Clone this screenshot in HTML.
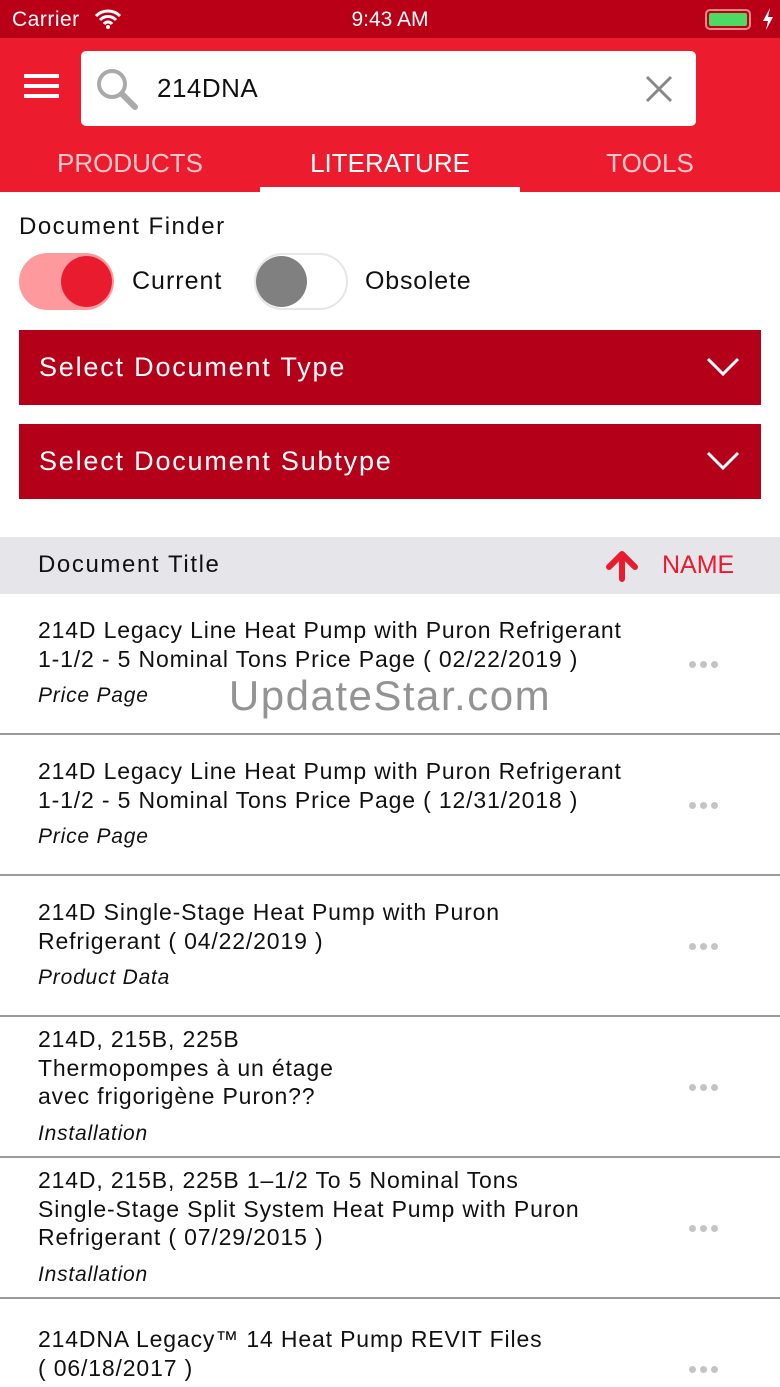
<!DOCTYPE html>
<html><head><meta charset="utf-8"><style>
*{margin:0;padding:0;box-sizing:border-box}
html{height:1387px;overflow:hidden}
body{width:780px;height:1387px;overflow:hidden;background:#fff;font-family:"Liberation Sans",sans-serif;position:relative;color:#111;white-space:nowrap}
.abs{position:absolute}
.status{top:0;left:0;width:780px;height:38px;background:#b90017;color:#fff;font-size:21px}
.hdr{top:38px;left:0;width:780px;height:154px;background:#ec1c2e}
.search{left:81px;top:51px;width:615px;height:75px;background:#fff;border-radius:5px}
.tab{top:148px;font-size:26px;color:#ffc9cd;width:260px;text-align:center}
.dd{left:19px;width:742px;height:75px;background:#b5001a;color:#fff;font-size:27px;padding-left:20px;line-height:75px;letter-spacing:1.8px}
.row{left:0;width:780px;height:141px;border-bottom:2px solid #9a9a9a;display:flex;flex-direction:column;justify-content:center;padding-left:38px;font-size:23px;line-height:28.5px;letter-spacing:0.85px}
.row i{display:block;margin-top:9px;font-size:21px;letter-spacing:0.8px}
.dots{position:absolute;right:62px;top:50%;margin-top:-3px;display:flex;gap:4px}
.dots span{width:7px;height:7px;border-radius:50%;background:#c4c4c4}
</style></head><body>
<div class="abs status">
<div class="abs" style="left:12px;top:8px;letter-spacing:0.5px">Carrier</div>
<svg class="abs" style="left:94px;top:8px" width="28" height="22" viewBox="0 0 28 22"><path d="M2 8a17 17 0 0 1 24 0M6 12a11 11 0 0 1 16 0M10 16a5 5 0 0 1 8 0" stroke="#fff" stroke-width="3" fill="none"/><circle cx="14" cy="19" r="2" fill="#fff"/></svg>
<div class="abs" style="left:0;width:780px;text-align:center;top:8px">9:43 AM</div>
<div class="abs" style="left:705px;top:9px;width:46px;height:21px;border:2px solid #e88;border-radius:5px;padding:2px"><div style="width:100%;height:100%;background:#4cd964;border-radius:2px"></div></div>
<svg class="abs" style="left:762px;top:8px" width="12" height="22" viewBox="0 0 12 22"><path d="M8 0L1 13h5l-2 9 7-13H6z" fill="#fff"/></svg>
</div>
<div class="abs hdr"></div>
<div class="abs" style="left:24px;top:74px;width:35px"><div style="height:4px;background:#fff;margin-bottom:6px"></div><div style="height:4px;background:#fff;margin-bottom:6px"></div><div style="height:4px;background:#fff"></div></div>
<div class="abs search">
<svg class="abs" style="left:12px;top:14px" width="50" height="50" viewBox="0 0 50 50"><circle cx="19" cy="19" r="13" stroke="#aaa" stroke-width="4" fill="none"/><path d="M29 29l13 13" stroke="#aaa" stroke-width="6" stroke-linecap="round"/></svg>
<div class="abs" style="left:76px;top:22px;font-size:26px;color:#111;letter-spacing:0.5px">214DNA</div>
<svg class="abs" style="left:564px;top:24px" width="28" height="28" viewBox="0 0 28 28"><path d="M2 2l24 24M26 2L2 26" stroke="#888" stroke-width="3"/></svg>
</div>
<div class="abs tab" style="left:0">PRODUCTS</div>
<div class="abs tab" style="left:260px;color:#fff">LITERATURE</div>
<div class="abs tab" style="left:520px">TOOLS</div>
<div class="abs" style="left:260px;top:187px;width:260px;height:5px;background:#fff"></div>
<div class="abs" style="left:19px;top:213px;font-size:24px;letter-spacing:1.5px">Document Finder</div>
<div class="abs" style="left:19px;top:253px;width:95px;height:57px;border-radius:29px;background:#fe9a9e"></div>
<div class="abs" style="left:61px;top:256px;width:51px;height:51px;border-radius:50%;background:#e81c2e"></div>
<div class="abs" style="left:132px;top:267px;font-size:25px;letter-spacing:1px">Current</div>
<div class="abs" style="left:254px;top:253px;width:94px;height:57px;border-radius:29px;background:#fff;border:2px solid #e6e6e6"></div>
<div class="abs" style="left:256px;top:256px;width:51px;height:51px;border-radius:50%;background:#808080"></div>
<div class="abs" style="left:365px;top:267px;font-size:25px;letter-spacing:0.8px">Obsolete</div>
<div class="abs dd" style="top:330px">Select Document Type</div>
<div class="abs dd" style="top:424px">Select Document Subtype</div>
<svg class="abs" style="left:706px;top:357px" width="34" height="20" viewBox="0 0 34 20"><path d="M2 2l15 15L32 2" stroke="#fff" stroke-width="3" fill="none"/></svg>
<svg class="abs" style="left:706px;top:451px" width="34" height="20" viewBox="0 0 34 20"><path d="M2 2l15 15L32 2" stroke="#fff" stroke-width="3" fill="none"/></svg>
<div class="abs" style="left:0;top:537px;width:780px;height:57px;background:#e6e6ea"></div>
<div class="abs" style="left:38px;top:551px;font-size:24px;letter-spacing:1.6px">Document Title</div>
<svg class="abs" style="left:604px;top:550px" width="36" height="32" viewBox="0 0 36 32"><path d="M18 29V6M5 17L18 4l13 13" stroke="#e81c2e" stroke-width="6" fill="none" stroke-linecap="round" stroke-linejoin="round"/></svg>
<div class="abs" style="left:662px;top:551px;font-size:25px;color:#e81c2e">NAME</div>
<div class="abs row" style="top:594px">214D Legacy Line Heat Pump with Puron Refrigerant<br>1-1/2 - 5 Nominal Tons Price Page ( 02/22/2019 )<i>Price Page</i><div class="dots"><span></span><span></span><span></span></div></div>
<div class="abs row" style="top:735px">214D Legacy Line Heat Pump with Puron Refrigerant<br>1-1/2 - 5 Nominal Tons Price Page ( 12/31/2018 )<i>Price Page</i><div class="dots"><span></span><span></span><span></span></div></div>
<div class="abs row" style="top:876px">214D Single-Stage Heat Pump with Puron<br>Refrigerant ( 04/22/2019 )<i>Product Data</i><div class="dots"><span></span><span></span><span></span></div></div>
<div class="abs row" style="top:1017px">214D, 215B, 225B<br>Thermopompes à un étage<br>avec frigorigène Puron??<i>Installation</i><div class="dots"><span></span><span></span><span></span></div></div>
<div class="abs row" style="top:1158px">214D, 215B, 225B 1–1/2 To 5 Nominal Tons<br>Single-Stage Split System Heat Pump with Puron<br>Refrigerant ( 07/29/2015 )<i>Installation</i><div class="dots"><span></span><span></span><span></span></div></div>
<div class="abs row" style="top:1299px;border:none;justify-content:flex-start;padding-top:26px">214DNA Legacy™ 14 Heat Pump REVIT Files<br>( 06/18/2017 )<div class="dots" style="top:70px"><span></span><span></span><span></span></div></div>
<div class="abs" style="left:0;width:780px;top:672px;text-align:center;font-size:42px;color:rgba(120,120,120,0.8);letter-spacing:1.5px">UpdateStar.com</div>
</body></html>
